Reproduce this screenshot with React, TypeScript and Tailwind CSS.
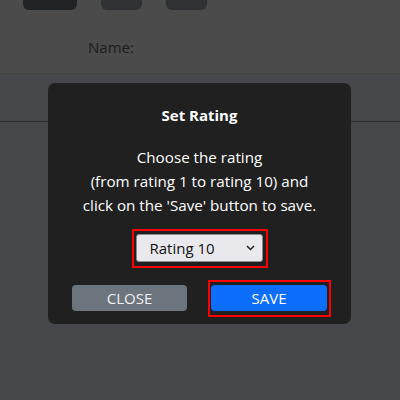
import React from "react";

export default function App() {
  const font = { fontFamily: '"Open Sans", "Noto Sans", sans-serif' };
  return (
    <div className="relative w-[400px] h-[400px] overflow-hidden bg-[#46474b]" style={font}>
      <div className="h-[74px] bg-[#4b4b4b] border-b border-[#434343] flex flex-col">
        <div className="flex h-[10px]">
          <div className="ml-[23px] w-[54px] h-[10px] rounded-b-[6px] bg-[#212427]" />
          <div className="ml-[24px] w-[41px] h-[10px] rounded-b-[6px] bg-[#303134]" />
          <div className="ml-[24px] w-[41px] h-[10px] rounded-b-[6px] bg-[#303134]" />
        </div>
        <div className="pl-[88px] pt-[26px] text-[15px] leading-[22px] text-[#1c1c1c]">Name:</div>
      </div>
      <div className="h-[48px] border-b border-[#2f3034]" />

      <div className="absolute left-[48px] top-[83px] w-[303px] h-[241px] rounded-[7px] bg-[#202020] flex flex-col items-center text-white">
        <div className="mt-[20px] text-[15px] leading-[24px] font-bold">Set Rating</div>
        <div className="mt-[18px] text-[15.2px] leading-[24px] text-center text-white">
          Choose the rating
          <br />
          (from rating 1 to rating 10) and
          <br />
          click on the 'Save' button to save.
        </div>
        <div className="mt-[12px] border-2 border-[#ff0000] pt-[3px] pb-[4px] pl-[2px] pr-[3px]">
          <div className="relative w-[127px] h-[28px] rounded-[3px] bg-[#e9e8ed] border border-[#8a8a8a] flex items-center pl-[13px] text-[15px] text-[#111]">
            Rating 10
            <svg className="absolute right-[7px] top-[10px]" width="9" height="6" viewBox="0 0 9 6">
              <path d="M1 1 L4.5 4.5 L8 1" fill="none" stroke="#222" strokeWidth="1.5" />
            </svg>
          </div>
        </div>
        <div className="mt-[12px] w-full pl-[24px] flex items-start">
          <div className="mt-[5px] w-[115px] h-[26px] rounded-[4px] bg-[#6c757d] flex items-center justify-center text-[15px] text-[#eef0f2]">
            CLOSE
          </div>
          <div className="ml-[21px] w-[123px] border-2 border-[#ff0000] pt-[3px] pb-[4px] pl-[1px] pr-[2px]">
            <div className="h-[26px] rounded-[4px] bg-[#0d6efd] flex items-center justify-center text-[15px] text-white">
              SAVE
            </div>
          </div>
        </div>
      </div>
    </div>
  );
}
